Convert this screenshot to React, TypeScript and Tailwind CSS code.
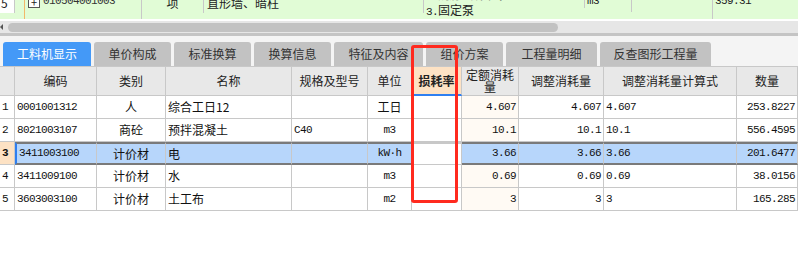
import React from "react";

const cjk = "font-['Noto_Sans_CJK_SC',sans-serif]";
const mono = "font-['Liberation_Mono',monospace] text-[11px] tracking-[-0.6px]";

const cols =
  "grid grid-cols-[15px_82px_69px_126px_76px_44px_50px_57px_85px_133px_61px]";

const tabs = [
  "工料机显示",
  "单价构成",
  "标准换算",
  "换算信息",
  "特征及内容",
  "组价方案",
  "工程量明细",
  "反查图形工程量",
];
const tabWidths = ["w-[88px]", "w-[77px]", "w-[77px]", "w-[77px]", "w-[89px]", "w-[77px]", "w-[91px]", "w-[111px]"];

const headers = ["", "编码", "类别", "名称", "规格及型号", "单位", "损耗率", "定额消耗量", "调整消耗量", "调整消耗量计算式", "数量"];

const rows = [
  ["1", "0001001312", "人", "综合工日12", "", "工日", "", "4.607", "4.607", "4.607", "253.8227"],
  ["2", "8021003107", "商砼", "预拌混凝土", "C40", "m3", "", "10.1", "10.1", "10.1", "556.4595"],
  ["3", "3411003100", "计价材", "电", "", "kW·h", "", "3.66", "3.66", "3.66", "201.6477"],
  ["4", "3411009100", "计价材", "水", "", "m3", "", "0.69", "0.69", "0.69", "38.0156"],
  ["5", "3603003100", "计价材", "土工布", "", "m2", "", "3", "3", "3", "165.285"],
];

function Cell({ row, col, v }: { row: number; col: number; v: string }) {
  const sel = row === 2;
  let cls = "h-[23px] border-r border-b border-[#c8c8c8] flex items-center overflow-visible whitespace-nowrap text-[12px] text-[#111] ";
  if (col === 0) {
    cls += sel ? "bg-[#fde2c4] pl-[2px] font-bold" : "bg-white pl-[2px]";
  } else if (sel && col === 6) {
    cls += "bg-white border-2 border-[#7a7a7a]";
  } else if (sel) {
    cls += "bg-[#b7d6fb] border-t-2 border-b-2 border-t-[#7a7a7a] border-b-[#7a7a7a]";
    if (col === 1) cls += " border-l-2 border-l-[#2f7ff0]";
  } else if (col === 7) {
    cls += "bg-[#fffaf4]";
  } else {
    cls += "bg-white";
  }
  if (col === 2 || col === 5) cls += " justify-center";
  if (col === 7 || col === 8 || col === 10) cls += " justify-end pr-[2px]";
  if (col === 1 || col === 3 || col === 4 || col === 9) cls += " pl-[2px]";
  const isCjk = /[\u4e00-\u9fff]/.test(v);
  return (
    <div className={cls}>
      <span className={isCjk ? cjk : mono}>{v}</span>
    </div>
  );
}

export default function App() {
  return (
    <div className={`relative w-[798px] h-[256px] bg-white overflow-hidden ${cjk}`}>
      {/* top partial row, cut off by the scroll position */}
      <div className="h-[19px] bg-[#e1fcd6] flex overflow-hidden text-[12px] text-[#222]">
        <div className="w-[15px] h-full bg-white border-r border-[#c8c8c8] pl-[1px] -mt-[6px]">5</div>
        <div className="w-[127px] h-full border-r border-[#c8c8c8] flex">
          <div className="w-[10px] border-r border-[#f2b76a]" />
          <div className="ml-[3px] -mt-[4px] w-[12px] h-[12px] border border-[#555] bg-white flex items-center justify-center text-[11px] leading-none">+</div>
          <span className={`${mono} ml-[3px] -mt-[7px] text-[#333]`}>010504001003</span>
        </div>
        <div className="w-[62px] h-full border-r border-[#c8c8c8] flex justify-center -mt-[6px]">项</div>
        <div className="w-[220px] h-full border-r border-[#c8c8c8] pl-[3px] -mt-[6px]">直形墙、暗柱</div>
        <div className="w-[161px] h-full border-r border-[#c8c8c8] pl-[2px] leading-[14px] -mt-[11px]">
          <div className={`${mono} text-[#333]`}>1.混凝土种类:泵</div>
          <div><span className={mono}>3.</span>固定泵</div>
        </div>
        <div className={`w-[47px] h-full border-r border-[#c8c8c8] pl-[2px] -mt-[7px] ${mono}`}>m3</div>
        <div className="w-[81px] h-full border-r border-[#c8c8c8]" />
        <div className={`flex-1 pl-[2px] -mt-[7px] ${mono}`}>359.31</div>
      </div>
      {/* scrollbar */}
      <div className="mt-[2px] h-[12px] bg-[#e6e6e6] flex items-center">
        <div className="w-0 h-0 border-y-[3px] border-y-transparent border-r-[3px] border-r-[#555]" />
        <div className="ml-[5px] w-[550px] h-[9px] rounded-full bg-[#c2c2c2]" />
      </div>
      <div className="h-[3px] bg-[#c4c4c4]" />
      {/* tabs */}
      <div className="h-[31px] bg-[#f4f4f4] flex items-end gap-[3px] pl-[3px] border-b border-[#c8c8c8]">
        {tabs.map((t, i) => (
          <div
            key={t}
            className={`${tabWidths[i]} h-[24px] rounded-t-[3px] flex items-center justify-center text-[12px] ${
              i === 0 ? "bg-[#4499f7] text-white" : "bg-[#c2c2c2] text-[#333]"
            }`}
          >
            {t}
          </div>
        ))}
      </div>
      {/* header */}
      <div className={cols}>
        {headers.map((h, i) => (
          <div
            key={i}
            className={`h-[29px] border-r border-b border-[#c8c8c8] flex items-center justify-center text-center text-[12px] leading-[12px] text-[#222] ${
              i === 6 ? "bg-[#fde2c4] font-bold border-b-2 border-b-[#2f7ff0]" : "bg-[#e8e8e8]"
            }`}
          >
            {i === 7 ? (
              <span>
                定额消耗
                <br />量
              </span>
            ) : (
              h
            )}
          </div>
        ))}
      </div>
      {/* body */}
      <div className={cols}>
        {rows.map((r, ri) => r.map((v, ci) => <Cell key={`${ri}-${ci}`} row={ri} col={ci} v={v} />))}
      </div>
      {/* red highlight */}
      <div className="absolute left-[411px] top-[45px] w-[47px] h-[158px] border-[3px] border-[#ff2a1f] rounded-[3px]" />
    </div>
  );
}
